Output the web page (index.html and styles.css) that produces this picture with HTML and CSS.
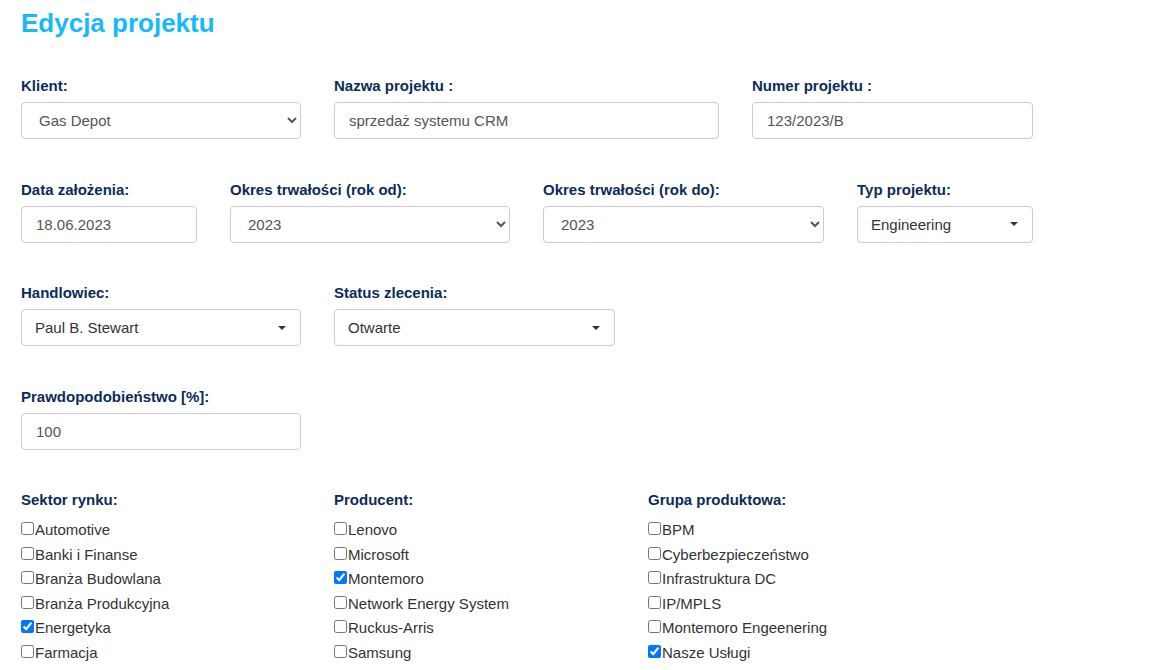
FILE: index.html
```html
<!DOCTYPE html>
<html lang="pl">
<head>
    <meta charset="UTF-8">
    <meta name="viewport" content="width=device-width, initial-scale=1">
    <title>Edycja projektu</title>
    <link rel="stylesheet" href="styles.css">
</head>
<body>
    <h1>Edycja projektu</h1>

    <form class="project-form">
        <div class="form-row">
            <div class="field w-280">
                <label>Klient:</label>
                <select class="form-control">
                    <option>Gas Depot</option>
                </select>
            </div>
            <div class="field w-385">
                <label>Nazwa projektu :</label>
                <input class="form-control" type="text" value="sprzedaż systemu CRM">
            </div>
            <div class="field w-281">
                <label>Numer projektu :</label>
                <input class="form-control" type="text" value="123/2023/B">
            </div>
        </div>

        <div class="form-row">
            <div class="field w-176">
                <label>Data założenia:</label>
                <input class="form-control" type="text" value="18.06.2023">
            </div>
            <div class="field w-280">
                <label>Okres trwałości (rok od):</label>
                <select class="form-control">
                    <option>2023</option>
                </select>
            </div>
            <div class="field w-281">
                <label>Okres trwałości (rok do):</label>
                <select class="form-control">
                    <option>2023</option>
                </select>
            </div>
            <div class="field w-176">
                <label>Typ projektu:</label>
                <button type="button" class="picker">Engineering <span class="caret"></span></button>
            </div>
        </div>

        <div class="form-row">
            <div class="field w-280">
                <label>Handlowiec:</label>
                <button type="button" class="picker">Paul B. Stewart <span class="caret"></span></button>
            </div>
            <div class="field w-281">
                <label>Status zlecenia:</label>
                <button type="button" class="picker">Otwarte <span class="caret"></span></button>
            </div>
        </div>

        <div class="form-row">
            <div class="field w-280">
                <label>Prawdopodobieństwo [%]:</label>
                <input class="form-control" type="text" value="100">
            </div>
        </div>

        <div class="form-row">
            <div class="field w-280">
                <label>Sektor rynku:</label>
                <div class="check-list">
                    <label class="check"><input type="checkbox">Automotive</label>
                    <label class="check"><input type="checkbox">Banki i Finanse</label>
                    <label class="check"><input type="checkbox">Branża Budowlana</label>
                    <label class="check"><input type="checkbox">Branża Produkcyjna</label>
                    <label class="check"><input type="checkbox" checked>Energetyka</label>
                    <label class="check"><input type="checkbox">Farmacja</label>
                    <label class="check"><input type="checkbox">Handel</label>
                </div>
            </div>
            <div class="field w-281">
                <label>Producent:</label>
                <div class="check-list">
                    <label class="check"><input type="checkbox">Lenovo</label>
                    <label class="check"><input type="checkbox">Microsoft</label>
                    <label class="check"><input type="checkbox" checked>Montemoro</label>
                    <label class="check"><input type="checkbox">Network Energy System</label>
                    <label class="check"><input type="checkbox">Ruckus-Arris</label>
                    <label class="check"><input type="checkbox">Samsung</label>
                    <label class="check"><input type="checkbox">Sophos</label>
                </div>
            </div>
            <div class="field w-281">
                <label>Grupa produktowa:</label>
                <div class="check-list">
                    <label class="check"><input type="checkbox">BPM</label>
                    <label class="check"><input type="checkbox">Cyberbezpieczeństwo</label>
                    <label class="check"><input type="checkbox">Infrastruktura DC</label>
                    <label class="check"><input type="checkbox">IP/MPLS</label>
                    <label class="check"><input type="checkbox">Montemoro Engeenering</label>
                    <label class="check"><input type="checkbox" checked>Nasze Usługi</label>
                    <label class="check"><input type="checkbox">Sieci LAN</label>
                </div>
            </div>
        </div>
    </form>
</body>
</html>
```

FILE: styles.css
```css
body {
    margin: 0;
    padding: 8px 21px 0;
    font-family: "Liberation Sans", Arial, sans-serif;
    font-size: 15px;
    color: #333;
    background-color: #fff;
}

h1 {
    margin: 0 0 38px;
    font-size: 26px;
    line-height: 30px;
    font-weight: bold;
    color: #17b8fc;
}

.form-row {
    display: flex;
    gap: 33px;
    margin-bottom: 40.5px;
}

.field > label {
    display: block;
    font-size: 15px;
    font-weight: bold;
    line-height: 20px;
    color: #0b2c58;
    margin-bottom: 6px;
}

.w-176 { width: 176px; }
.w-280 { width: 280px; }
.w-281 { width: 281px; }
.w-385 { width: 385px; }

.form-control {
    display: block;
    box-sizing: border-box;
    width: 100%;
    height: 37px;
    padding: 6px 14px;
    font-family: inherit;
    font-size: 15px;
    color: #555;
    background-color: #fff;
    border: 1px solid #ccc;
    border-radius: 4px;
    outline: none;
}

select.form-control {
    padding-left: 13px;
}

/* przycisk w stylu bootstrap-select */
.picker {
    display: flex;
    align-items: center;
    justify-content: space-between;
    box-sizing: border-box;
    width: 100%;
    height: 37px;
    padding: 6px 14px 6px 13px;
    font-family: inherit;
    font-size: 15px;
    color: #333;
    background-color: #fff;
    border: 1px solid #ccc;
    border-radius: 4px;
    cursor: pointer;
}

.caret {
    width: 0;
    height: 0;
    border-top: 4px solid #333;
    border-left: 4px solid transparent;
    border-right: 4px solid transparent;
}

.check-list {
    margin-top: 8px;
}

.check {
    display: block;
    line-height: 24.6px;
    color: #333;
    white-space: nowrap;
}

.check input {
    width: 13px;
    height: 13px;
    margin: 0 1px 2px 0;
    vertical-align: baseline;
}
```
